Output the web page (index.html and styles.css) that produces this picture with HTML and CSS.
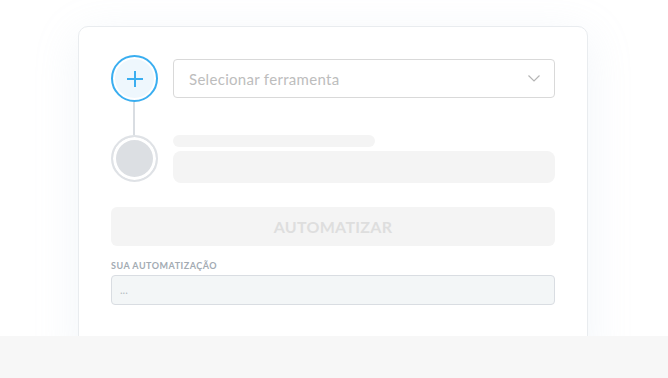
FILE: index.html
```html
<!DOCTYPE html>
<html lang="pt-BR">
<head>
    <meta charset="UTF-8">
    <meta name="viewport" content="width=device-width, initial-scale=1.0">
    <title>Automatizar</title>
    <link rel="stylesheet" href="styles.css">
</head>
<body>

<div class="stage">
    <div class="card">
        <div class="step">
            <div class="dot dot-add">
                <svg width="20" height="20" viewBox="0 0 20 20">
                    <path d="M10 2v16M2 10h16" stroke="#3aaef0" stroke-width="2" fill="none"/>
                </svg>
            </div>
            <div class="select">
                <span>Selecionar ferramenta</span>
                <svg width="12" height="7" viewBox="0 0 12 7">
                    <path d="M0.5 0.5l5.5 5.5 5.5-5.5" stroke="#b5b5b5" stroke-width="1.2" fill="none"/>
                </svg>
            </div>
        </div>
        <div class="connector"></div>
        <div class="step step-top">
            <div class="dot dot-empty"></div>
            <div class="skeleton">
                <div class="sk-line"></div>
                <div class="sk-box"></div>
            </div>
        </div>
        <button class="btn" disabled>AUTOMATIZAR</button>
        <div class="label">SUA AUTOMATIZAÇÃO</div>
        <div class="result">...</div>
    </div>
</div>
<div class="footer"></div>

</body>
</html>
```

FILE: styles.css
```css
body {
    margin: 0;
    background: #fff;
    font-family: Lato, "Open Sans", sans-serif;
    overflow: hidden;
}
.stage {
    height: 336px;
    padding-top: 26px;
    box-sizing: border-box;
    overflow: hidden;
}
.card {
    margin-left: 78px;
    width: 510px;
    height: 340px;
    box-sizing: border-box;
    padding: 28px 32px 0 32px;
    background: #fff;
    border: 1px solid #e9ecef;
    border-radius: 10px;
    box-shadow: 0 10px 45px rgba(180, 200, 220, 0.18);
}
.step {
    display: flex;
    align-items: center;
    gap: 15px;
}
.step-top {
    align-items: flex-start;
}
.dot {
    width: 47px;
    height: 47px;
    box-sizing: border-box;
    border-radius: 50%;
    flex-shrink: 0;
    display: flex;
    align-items: center;
    justify-content: center;
}
.dot-add {
    border: 2px solid #3aaef0;
    background: #eef7fd;
    box-shadow: inset 0 0 0 2px #fff;
}
.dot-empty {
    border: 2px solid #dfe2e6;
    background: #dcdfe3;
    box-shadow: inset 0 0 0 3px #fff;
}
.select {
    flex: 1;
    height: 39px;
    box-sizing: border-box;
    border: 1px solid #d9d9d9;
    border-radius: 4px;
    display: flex;
    align-items: center;
    justify-content: space-between;
    padding: 0 14px 0 15px;
    font-size: 15px;
    letter-spacing: 0.3px;
    color: #bdbdbd;
}
.connector {
    width: 2px;
    height: 33px;
    margin-left: 22px;
    background: #d9dde2;
}
.skeleton {
    flex: 1;
    display: flex;
    flex-direction: column;
    gap: 4px;
}
.sk-line {
    width: 202px;
    height: 12px;
    border-radius: 6px;
    background: #f4f4f4;
}
.sk-box {
    height: 32px;
    border-radius: 8px;
    background: #f4f4f4;
}
.btn {
    display: block;
    width: 100%;
    height: 39px;
    margin-top: 24px;
    border: none;
    border-radius: 6px;
    background: #f4f4f4;
    color: #dedede;
    font-family: inherit;
    font-size: 16px;
    font-weight: 700;
    letter-spacing: 0.3px;
}
.label {
    margin-top: 14px;
    font-size: 9px;
    font-weight: 700;
    color: #a3abb3;
    letter-spacing: 0.5px;
}
.result {
    margin-top: 4px;
    height: 30px;
    box-sizing: border-box;
    border: 1px solid #d9dde2;
    border-radius: 4px;
    background: #f3f6f7;
    padding: 7px 8px;
    font-size: 11px;
    color: #b5bcc2;
}
.footer {
    height: 42px;
    background: #f7f7f7;
}
```
